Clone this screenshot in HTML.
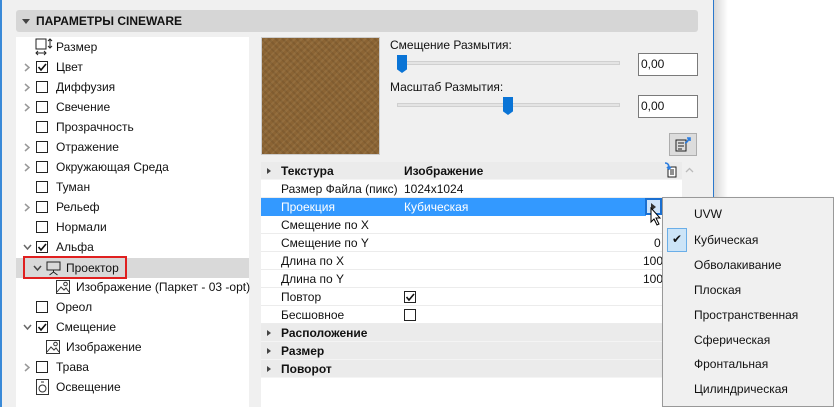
<!DOCTYPE html>
<html><head><meta charset="utf-8"><style>
*{margin:0;padding:0;box-sizing:border-box}
body{width:834px;height:407px;overflow:hidden;background:#fff;font-family:"Liberation Sans","Noto Sans CJK JP",sans-serif;font-size:12px;color:#111;position:relative;white-space:nowrap}
.a{position:absolute}
.dlg{left:0;top:0;width:714px;height:407px;background:#f0f0f0;border-left:2px solid #3a8ad8;border-right:1px solid #2a78cc}
.shadow{left:714px;top:0;width:14px;height:407px;background:linear-gradient(to right,#d8d8d8,#fff)}
.hdr{left:16px;top:10px;width:682px;height:22px;background:#d6d6d6;border-radius:3px;font-weight:bold;font-size:12px;line-height:22px;padding-left:20px}
.tree{left:16px;top:37px;width:233px;height:370px;background:#fff}
.row{position:absolute;left:0;width:233px;height:20px;line-height:20px}
.row .t{position:absolute;left:40px}
.cb{position:absolute;left:20px;top:4px;width:12px;height:12px;border:1px solid #222;background:#fff}
.chev{position:absolute;left:7px;top:6px}
.tbl{left:261px;top:162px;width:421px;height:245px;background:#fff}
.tr{position:absolute;left:0;width:421px;height:18px;line-height:18px;border-bottom:1px solid #ececec}
.sec{background:#ebebeb;font-weight:bold;border-bottom:1px solid #f4f4f4}
.menu{left:662px;top:197px;width:172px;height:210px;background:#f0f0f0;border:1px solid #999;box-shadow:3px 3px 4px rgba(0,0,0,.25)}
.mi{position:absolute;left:31px}
.inp{width:60px;height:23px;border:1px solid #7a7a7a;background:#fff;line-height:21px;padding-left:2px}
</style></head><body>
<div class="a dlg"></div>
<div class="a shadow"></div>
<div class="a hdr">ПАРАМЕТРЫ CINEWARE</div>
<div class="a" style="left:22px;top:19px;width:0;height:0;border-left:4px solid transparent;border-right:4px solid transparent;border-top:5px solid #444"></div>

<div class="a tree">
 <div class="row" style="top:0"><svg class="a" style="left:19px;top:0" width="18" height="20"><rect x="1" y="2" width="10" height="10" fill="none" stroke="#222"/><path d="M15 2v9M13 4l2-2 2 2M13 9l2 2 2-2M1 16h10M3 14l-2 2 2 2M9 14l2 2-2 2" stroke="#222" fill="none"/></svg><span class="t">Размер</span></div>
 <div class="row" style="top:20px"><svg class="chev" width="8" height="9"><path d="M2 1l4 3.5-4 3.5" stroke="#999" stroke-width="1.5" fill="none"/></svg><span class="cb"><svg width="10" height="10" style="position:absolute;left:0;top:0"><path d="M1.5 5l2.5 3 5-6" stroke="#111" stroke-width="1.6" fill="none"/></svg></span><span class="t">Цвет</span></div>
 <div class="row" style="top:40px"><svg class="chev" width="8" height="9"><path d="M2 1l4 3.5-4 3.5" stroke="#999" stroke-width="1.5" fill="none"/></svg><span class="cb"></span><span class="t">Диффузия</span></div>
 <div class="row" style="top:60px"><svg class="chev" width="8" height="9"><path d="M2 1l4 3.5-4 3.5" stroke="#999" stroke-width="1.5" fill="none"/></svg><span class="cb"></span><span class="t">Свечение</span></div>
 <div class="row" style="top:80px"><span class="cb"></span><span class="t">Прозрачность</span></div>
 <div class="row" style="top:100px"><svg class="chev" width="8" height="9"><path d="M2 1l4 3.5-4 3.5" stroke="#999" stroke-width="1.5" fill="none"/></svg><span class="cb"></span><span class="t">Отражение</span></div>
 <div class="row" style="top:120px"><svg class="chev" width="8" height="9"><path d="M2 1l4 3.5-4 3.5" stroke="#999" stroke-width="1.5" fill="none"/></svg><span class="cb"></span><span class="t">Окружающая Среда</span></div>
 <div class="row" style="top:140px"><span class="cb"></span><span class="t">Туман</span></div>
 <div class="row" style="top:160px"><svg class="chev" width="8" height="9"><path d="M2 1l4 3.5-4 3.5" stroke="#999" stroke-width="1.5" fill="none"/></svg><span class="cb"></span><span class="t">Рельеф</span></div>
 <div class="row" style="top:180px"><span class="cb"></span><span class="t">Нормали</span></div>
 <div class="row" style="top:200px"><svg class="chev" width="9" height="8"><path d="M1 2l3.5 4 3.5-4" stroke="#666" stroke-width="1.5" fill="none"/></svg><span class="cb"><svg width="10" height="10" style="position:absolute;left:0;top:0"><path d="M1.5 5l2.5 3 5-6" stroke="#111" stroke-width="1.6" fill="none"/></svg></span><span class="t">Альфа</span></div>
 <div class="row" style="top:221px;height:20px;background:#d9d9d9"></div>
 <div class="a" style="left:7px;top:219px;width:104px;height:23px;border:2px solid #e02020"></div>
 <div class="row" style="top:221px"><svg class="chev" style="left:17px" width="9" height="8"><path d="M1 2l3.5 4 3.5-4" stroke="#444" stroke-width="1.5" fill="none"/></svg><svg class="a" style="left:30px;top:2px" width="16" height="16"><rect x="1" y="2" width="13" height="8" fill="none" stroke="#222"/><path d="M7.5 10v2M7.5 12l-4 3M7.5 12l4 3" stroke="#222" fill="none"/></svg><span class="t" style="left:50px">Проектор</span></div>
 <div class="row" style="top:240px"><svg class="a" style="left:40px;top:3px" width="14" height="14"><rect x="0.5" y="0.5" width="13" height="13" fill="#fff" stroke="#333"/><path d="M1 12l4-5 3 3 2-2 3 4" fill="none" stroke="#333"/><circle cx="9.5" cy="4" r="1.8" fill="none" stroke="#333"/></svg><span class="t" style="left:60px">Изображение (Паркет - 03 -opt)</span></div>
 <div class="row" style="top:260px"><span class="cb"></span><span class="t">Ореол</span></div>
 <div class="row" style="top:280px"><svg class="chev" width="9" height="8"><path d="M1 2l3.5 4 3.5-4" stroke="#666" stroke-width="1.5" fill="none"/></svg><span class="cb"><svg width="10" height="10" style="position:absolute;left:0;top:0"><path d="M1.5 5l2.5 3 5-6" stroke="#111" stroke-width="1.6" fill="none"/></svg></span><span class="t">Смещение</span></div>
 <div class="row" style="top:300px"><svg class="a" style="left:30px;top:3px" width="14" height="14"><rect x="0.5" y="0.5" width="13" height="13" fill="#fff" stroke="#333"/><path d="M1 12l4-5 3 3 2-2 3 4" fill="none" stroke="#333"/><circle cx="9.5" cy="4" r="1.8" fill="none" stroke="#333"/></svg><span class="t" style="left:50px">Изображение</span></div>
 <div class="row" style="top:320px"><svg class="chev" width="8" height="9"><path d="M2 1l4 3.5-4 3.5" stroke="#999" stroke-width="1.5" fill="none"/></svg><span class="cb"></span><span class="t">Трава</span></div>
 <div class="row" style="top:340px"><svg class="a" style="left:20px;top:2px" width="13" height="16"><rect x="0.5" y="0.5" width="12" height="15" fill="none" stroke="#333"/><circle cx="6.5" cy="9.5" r="3.5" fill="none" stroke="#333"/><path d="M5 3h3" stroke="#333"/></svg><span class="t">Освещение</span></div>
</div>

<div class="a" style="left:261px;top:37px;width:119px;height:118px;background:#8b6434;background-image:repeating-linear-gradient(45deg,rgba(0,0,0,.08) 0 2px,transparent 2px 5px),repeating-linear-gradient(-45deg,rgba(255,230,180,.08) 0 2px,transparent 2px 5px);border:1px solid #ccc"></div>
<div class="a" style="left:390px;top:38px">Смещение Размытия:</div>
<div class="a" style="left:397px;top:61px;width:223px;height:4px;background:#e4e4e4;border:1px solid #d0d0d0"></div>
<div class="a" style="left:397px;top:55px;width:10px;height:18px;background:#0a74d6;clip-path:polygon(0 0,100% 0,100% 80%,50% 100%,0 80%)"></div>
<div class="a inp" style="left:638px;top:53px">0,00</div>
<div class="a" style="left:390px;top:80px">Масштаб Размытия:</div>
<div class="a" style="left:397px;top:103px;width:223px;height:4px;background:#e4e4e4;border:1px solid #d0d0d0"></div>
<div class="a" style="left:503px;top:97px;width:10px;height:18px;background:#0a74d6;clip-path:polygon(0 0,100% 0,100% 80%,50% 100%,0 80%)"></div>
<div class="a inp" style="left:638px;top:95px">0,00</div>
<div class="a" style="left:669px;top:133px;width:28px;height:23px;background:#dcdcdc;border:1px solid #adadad"><svg width="26" height="21"><rect x="6" y="6" width="10" height="11" fill="none" stroke="#222"/><path d="M8 9h6M8 12h6M8 15h4" stroke="#222"/><path d="M15 9q3-1 4-5M17 4h3v3" stroke="#2b7de0" stroke-width="1.6" fill="none"/></svg></div>

<div class="a tbl">
 <div class="tr sec" style="top:0;height:18px"><span class="a" style="left:6px;top:6px;border-top:3px solid transparent;border-bottom:3px solid transparent;border-left:4px solid #444"></span><span class="a" style="left:20px">Текстура</span><span class="a" style="left:143px">Изображение</span></div>
 <div class="tr" style="top:18px"><span class="a" style="left:20px">Размер Файла (пикс)</span><span class="a" style="left:143px">1024x1024</span></div>
 <div class="tr" style="top:36px;width:385px;background:#3399ff;color:#fff;border:none"><span class="a" style="left:20px">Проекция</span><span class="a" style="left:143px">Кубическая</span></div>
 <div class="tr" style="top:54px"><span class="a" style="left:20px">Смещение по X</span></div>
 <div class="tr" style="top:72px"><span class="a" style="left:20px">Смещение по Y</span><span class="a" style="left:393px">0</span></div>
 <div class="tr" style="top:90px"><span class="a" style="left:20px">Длина по X</span><span class="a" style="left:382px">100</span></div>
 <div class="tr" style="top:108px"><span class="a" style="left:20px">Длина по Y</span><span class="a" style="left:382px">100</span></div>
 <div class="tr" style="top:126px"><span class="a" style="left:20px">Повтор</span><span class="a" style="left:143px;top:3px;width:12px;height:12px;border:1px solid #222"><svg width="10" height="10" style="position:absolute;left:0;top:0"><path d="M1.5 5l2.5 3 5-6" stroke="#111" stroke-width="1.6" fill="none"/></svg></span></div>
 <div class="tr" style="top:144px"><span class="a" style="left:20px">Бесшовное</span><span class="a" style="left:143px;top:3px;width:12px;height:12px;border:1px solid #222"></span></div>
 <div class="tr sec" style="top:162px"><span class="a" style="left:6px;top:6px;border-top:3px solid transparent;border-bottom:3px solid transparent;border-left:4px solid #444"></span><span class="a" style="left:20px">Расположение</span></div>
 <div class="tr sec" style="top:180px"><span class="a" style="left:6px;top:6px;border-top:3px solid transparent;border-bottom:3px solid transparent;border-left:4px solid #444"></span><span class="a" style="left:20px">Размер</span></div>
 <div class="tr sec" style="top:198px"><span class="a" style="left:6px;top:6px;border-top:3px solid transparent;border-bottom:3px solid transparent;border-left:4px solid #444"></span><span class="a" style="left:20px">Поворот</span></div>
</div>
<svg class="a" style="left:664px;top:162px" width="14" height="16"><rect x="4" y="5" width="8" height="10" fill="#fff" stroke="#222"/><path d="M6 8h4M6 10h4M6 12h4" stroke="#222"/><path d="M1 1q4 0 4 5M3 5l2 2 2-2" stroke="#2b7de0" stroke-width="1.6" fill="none"/></svg>
<svg class="a" style="left:685px;top:167px" width="9" height="6"><path d="M1 5l3.5-3.5 3.5 3.5" stroke="#bbb" stroke-width="1.3" fill="none"/></svg>
<div class="a" style="left:645px;top:198px;width:17px;height:17px;border:2px solid #1a6fd0;background:#cfe4fa"><span class="a" style="left:4px;top:3px;border-top:4px solid transparent;border-bottom:4px solid transparent;border-left:5px solid #333"></span></div>
<svg class="a" style="left:650px;top:207px" width="14" height="20"><path d="M1 1v14l3-3 3 6 2-1-3-6h4z" fill="#fff" stroke="#000"/></svg>

<div class="a menu">
 <div class="a" style="left:4px;top:30px;width:20px;height:24px;background:#cce4f7;border:1px solid #6aaee8"></div>
 <div class="a" style="left:9px;top:34px;font-size:12px">✔</div>
 <div class="mi" style="top:9px">UVW</div>
 <div class="mi" style="top:35px">Кубическая</div>
 <div class="mi" style="top:60px">Обволакивание</div>
 <div class="mi" style="top:85px">Плоская</div>
 <div class="mi" style="top:110px">Пространственная</div>
 <div class="mi" style="top:135px">Сферическая</div>
 <div class="mi" style="top:159px">Фронтальная</div>
 <div class="mi" style="top:184px">Цилиндрическая</div>
</div>
</body></html>
